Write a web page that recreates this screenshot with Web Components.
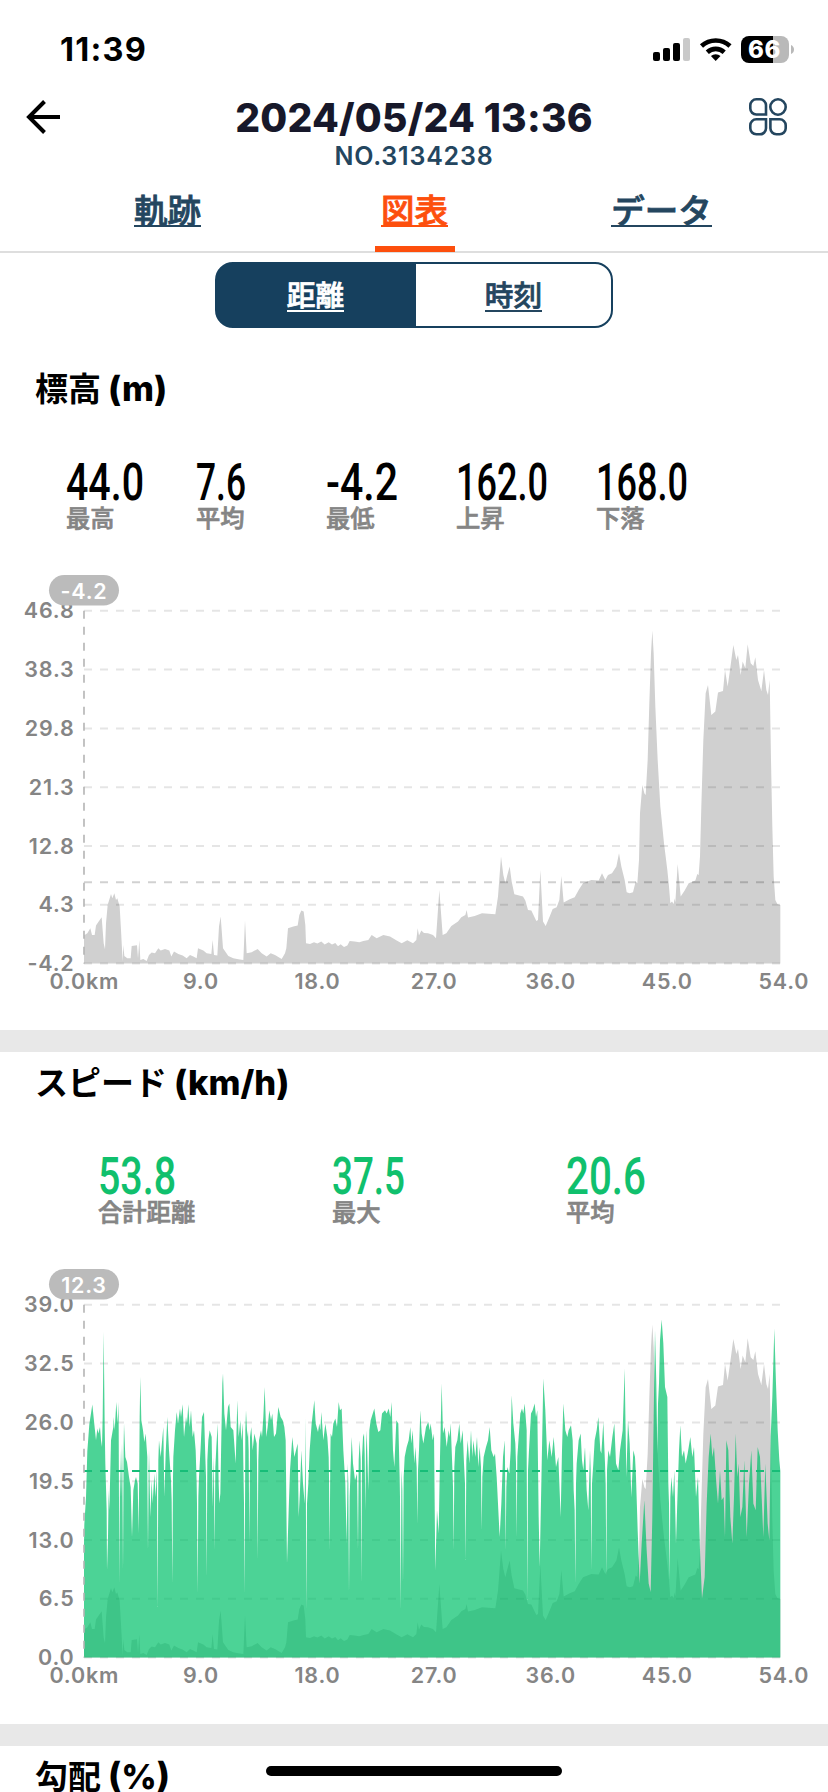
<!DOCTYPE html>
<html lang="ja">
<head>
<meta charset="utf-8">
<title>2024/05/24 13:36</title>
<style>
    html, body { margin: 0; padding: 0; background: #fff; }
    body {
        width: 828px;
        height: 1792px;
        overflow: hidden;
        font-family: Inter, "Noto Sans CJK JP", sans-serif;
        color: #000;
    }
</style>
</head>
<body>
<ride-screen>
    <status-bar slot="top" time="11:39" battery="66"></status-bar>
    <ride-header slot="top" number="NO.3134238">2024/05/24 13:36</ride-header>
    <tab-bar slot="top">
        <tab-item>軌跡</tab-item>
        <tab-item active>図表</tab-item>
        <tab-item>データ</tab-item>
    </tab-bar>
    <segment-control slot="top">
        <span slot="left">距離</span>
        <span slot="right">時刻</span>
    </segment-control>

    <chart-panel heading="標高" unit="(m)">
        <stat-value slot="stats" value="44.0" fit="78">最高</stat-value>
        <stat-value slot="stats" value="7.6" fit="50">平均</stat-value>
        <stat-value slot="stats" value="-4.2" fit="72">最低</stat-value>
        <stat-value slot="stats" value="162.0" fit="92">上昇</stat-value>
        <stat-value slot="stats" value="168.0" fit="92">下落</stat-value>
        <ride-chart ticks="46.8,38.3,29.8,21.3,12.8,4.3,-4.2" badge="-4.2" average="322.3"></ride-chart>
    </chart-panel>
    <chart-panel heading="スピード" unit="(km/h)" wide>
        <stat-value slot="stats" value="53.8" fit="78">合計距離</stat-value>
        <stat-value slot="stats" value="37.5" fit="73">最大</stat-value>
        <stat-value slot="stats" value="20.6" fit="80">平均</stat-value>
        <ride-chart ticks="39.0,32.5,26.0,19.5,13.0,6.5,0.0" badge="12.3" average="217" speed></ride-chart>
    </chart-panel>
    <chart-panel heading="勾配" unit="(%)"></chart-panel>
</ride-screen>

<script>
// "x,height" pairs, three units to a pixel, height measured up from the axis
const ELEVATION = `0,86 2,86 10,91 19,106 24,86 32,86 36,114 44,126 53,139 59,61 63,43 66,121 71,176 81,209 85,196 91,211
96,191 100,196 107,171 111,101 116,6 118,56 121,23 130,16 140,16 143,53 159,55 162,16 166,71 169,11 178,14 188,8 195,26
203,33 213,31 223,46 230,39 243,44 256,39 262,21 270,36 283,29 296,24 308,16 318,26 328,21 338,16 342,46 358,39 368,31
382,29 386,71 390,26 400,24 405,111 410,141 413,101 417,46 433,23 448,16 463,13 478,11 483,129 488,31 503,34 521,44
533,31 548,21 560,31 573,26 593,14 603,31 607,46 612,106 628,111 641,114 646,146 652,159 659,156 664,116 666,61 678,59
690,64 700,60 712,66 722,57 734,64 744,57 754,62 762,52 770,58 780,50 790,54 797,68 812,66 826,64 838,68 853,71 863,86
878,76 898,86 918,81 938,69 953,61 970,70 987,61 997,71 1001,106 1005,84 1012,99 1020,92 1032,91 1047,86 1056,76
1066,221 1076,86 1087,91 1102,113 1122,126 1132,139 1144,146 1148,161 1152,138 1172,143 1194,151 1234,148 1242,201
1251,321 1258,266 1264,241 1270,266 1277,291 1283,246 1291,208 1317,201 1324,189 1332,161 1342,159 1357,128 1362,131
1369,281 1377,126 1385,113 1397,141 1406,164 1418,169 1426,191 1432,263 1439,183 1457,193 1472,199 1484,221 1497,241
1522,251 1544,249 1554,271 1564,251 1572,266 1584,271 1597,291 1605,331 1612,291 1622,251 1628,214 1637,211 1647,214
1655,246 1660,241 1665,311 1668,451 1675,536 1681,511 1685,506 1691,611 1696,781 1701,931 1705,999 1709,931 1714,771
1721,611 1729,471 1740,361 1750,281 1755,231 1759,181 1764,186 1769,179 1772,196 1774,183 1781,299 1790,201 1802,219
1814,241 1834,249 1840,269 1844,266 1848,321 1852,471 1858,671 1865,811 1872,836 1882,746 1894,756 1902,813 1917,818
1923,881 1931,831 1938,881 1948,956 1957,911 1962,926 1970,866 1976,906 1984,886 1991,958 2000,901 2008,893 2014,919
2022,851 2032,818 2040,881 2047,821 2052,806 2057,851 2061,611 2065,411 2069,261 2074,191 2080,179 2089,176`;

const SPEED = `0,340 1,400 6,480 10,620 16,700 25,759 31,700 36,652 40,687 43,672 48,692 51,652 54,632 56,722 59,977 62,700
64,582 68,442 69,262 72,362 74,502 76,442 78,522 81,652 88,692 89,722 92,682 97,767 101,702 104,767 106,222 108,622
111,482 114,642 117,262 120,702 124,602 129,587 135,542 140,512 144,362 148,502 153,532 156,542 161,522 164,372 167,722
169,842 172,712 177,682 181,647 185,672 190,602 192,322 195,622 199,422 203,532 206,462 211,552 215,482 218,562 221,152
225,652 230,602 238,692 241,482 245,612 250,722 255,622 261,532 265,222 268,602 273,682 278,737 282,702 288,747 291,722
296,760 300,662 306,722 309,702 313,760 317,692 321,742 326,662 330,682 335,622 338,522 341,192 345,542 350,632 354,722
360,737 364,602 368,242 373,652 377,682 383,662 386,452 389,602 392,322 397,632 401,702 404,522 406,462 409,492 412,662
415,822 417,852 421,732 426,682 432,752 436,762 440,692 448,682 455,582 460,772 464,662 469,712 472,652 476,702 479,522
482,192 486,742 490,662 492,682 496,342 498,662 502,692 506,622 511,672 518,642 521,292 525,652 531,682 534,662 538,722
542,812 547,662 551,692 556,742 561,712 565,732 570,662 576,672 583,752 590,722 596,712 601,692 605,652 609,282 614,442
618,562 625,662 631,602 636,622 641,642 644,422 648,502 652,622 657,522 662,462 665,722 667,142 673,522 677,622 683,702
691,772 695,702 702,677 706,702 709,682 712,737 718,652 724,702 730,662 734,602 737,322 740,672 744,662 748,702 754,717
759,692 764,767 768,742 773,747 778,622 784,522 788,342 791,582 795,192 799,542 803,662 807,582 813,532 819,552 822,322
827,652 832,222 837,662 840,672 844,442 848,682 853,502 856,682 860,712 871,747 877,702 883,677 889,682 894,732 903,742
908,732 914,747 919,722 923,767 927,622 931,572 937,712 943,702 947,542 950,142 953,562 957,222 962,602 968,632 974,652
979,692 982,642 986,682 991,582 994,632 1000,402 1005,622 1009,742 1013,672 1018,642 1026,692 1033,707 1037,682 1040,702
1046,652 1050,672 1054,262 1059,442 1064,372 1068,602 1073,822 1077,672 1082,692 1088,632 1094,682 1097,662 1100,702
1105,572 1109,322 1114,632 1120,652 1126,702 1130,642 1136,682 1140,582 1145,292 1151,652 1156,582 1161,682 1165,602
1168,652 1174,602 1179,662 1183,572 1187,632 1193,382 1199,602 1206,632 1212,652 1217,692 1222,622 1229,602 1233,612
1238,542 1243,442 1247,362 1252,462 1257,602 1262,652 1265,322 1270,572 1276,552 1280,622 1283,787 1288,702 1294,642
1298,362 1304,662 1309,732 1314,747 1318,732 1322,762 1328,682 1330,172 1335,622 1341,732 1346,742 1352,762 1356,722
1360,742 1364,422 1367,272 1372,522 1378,837 1384,742 1390,592 1396,652 1403,602 1409,662 1416,572 1423,602 1430,422
1434,622 1438,762 1444,682 1450,662 1454,682 1461,697 1466,652 1469,502 1474,222 1478,582 1484,652 1490,672 1494,592
1498,562 1503,632 1508,502 1513,442 1518,622 1522,262 1528,582 1532,652 1538,682 1543,722 1549,622 1552,612 1558,707
1563,582 1567,242 1573,622 1578,602 1585,662 1591,702 1596,582 1603,562 1608,622 1616,682 1622,867 1627,542 1632,712
1637,642 1642,482 1648,622 1653,602 1656,542 1661,382 1667,222 1673,342 1681,472 1688,322 1694,222 1700,197 1705,422
1709,722 1713,982 1717,822 1720,612 1725,822 1728,952 1733,1014 1738,942 1743,812 1750,782 1753,522 1757,232 1762,542
1767,482 1771,562 1776,342 1781,502 1785,622 1789,697 1794,602 1800,622 1805,582 1811,612 1819,662 1825,602 1830,632
1836,482 1842,542 1848,322 1854,177 1862,242 1868,462 1874,602 1880,672 1885,602 1890,632 1897,522 1902,462 1908,562
1913,472 1919,482 1923,362 1927,652 1933,622 1939,422 1945,342 1950,482 1955,672 1960,542 1964,582 1969,422 1975,452
1981,592 1988,362 1995,522 2002,622 2008,462 2015,442 2021,632 2028,602 2033,482 2038,362 2044,582 2051,402 2056,352
2060,662 2065,782 2071,987 2076,822 2081,682 2086,592 2089,560`;

const PLOT = { left: 84, right: 780.4, top: 50.8, bottom: 403.6 };

function areaPath(data) {
    const raw = data.split(/\s+/).map(pair => pair.split(",").map(Number));
    const points = [];
    raw.forEach(([x, h], i) => {
        const prev = raw[i - 1];
        const next = raw[i + 1];
        // a short stop is a needle-thin gap, so keep its walls steep
        const stop = prev && next && prev[1] - h > 190 && next[1] - h > 190 && next[0] - prev[0] < 14;
        if (stop) points.push([x - 2, prev[1] - 60]);
        points.push([x, h]);
        if (stop) points.push([x + 2, next[1] - 60]);
    });
    const line = points.map(([x, h]) => `${(PLOT.left + x / 3).toFixed(2)} ${(PLOT.bottom - h / 3).toFixed(2)}`);
    return `M${PLOT.left} ${PLOT.bottom}L${line.join("L")}V${PLOT.bottom}Z`;
}

class RideScreen extends HTMLElement {
    constructor() {
        super();
        this.attachShadow({ mode: "open" });
    }
    connectedCallback() {
        this.shadowRoot.innerHTML = `
            <style>
                :host { display: block; position: relative; width: 828px; height: 1792px; overflow: hidden; background: #fff; }
                header { height: 358px; }
                .home { position: absolute; left: 266px; top: 1766px; width: 296px; height: 10px; border-radius: 5px; background: #000; }
            </style>
            <header><slot name="top"></slot></header>
            <main><slot></slot></main>
            <div class="home"></div>
        `;
    }
}

class StatusBar extends HTMLElement {
    constructor() {
        super();
        this.attachShadow({ mode: "open" });
    }
    connectedCallback() {
        this.shadowRoot.innerHTML = `
            <style>
                :host { display: flex; justify-content: space-between; box-sizing: border-box; height: 88px; padding: 30px 33px 0 60px; }
                time { font-size: 32.5px; font-weight: 700; line-height: 40px; letter-spacing: 1.2px; }
                svg { display: block; }
            </style>
            <time>${this.getAttribute("time")}</time>
            <svg width="143" height="36" viewBox="652 30 143 36">
                <rect x="653" y="52" width="7" height="9" rx="2"/>
                <rect x="663" y="48" width="7" height="13" rx="2"/>
                <rect x="673" y="43" width="7" height="18" rx="2"/>
                <rect x="683" y="38" width="7" height="23" rx="2" fill="#c9c9c9"/>
                <g fill="none" stroke="#000" stroke-width="4.6">
                    <path d="M701.5 46a21 21 0 0 1 28.500 0"/>
                    <path d="M707.300 52.200a12.500 12.500 0 0 1 16.900 0"/>
                </g>
                <path d="M715.700 61l-4.800-4.900a7 7 0 0 1 9.600 0z"/>
                <clipPath id="body"><rect x="741" y="36" width="48" height="27" rx="8"/></clipPath>
                <g clip-path="url(#body)">
                    <rect x="741" y="36" width="32" height="27"/>
                    <rect x="773" y="36" width="16" height="27" fill="#b9b9b9"/>
                </g>
                <path d="M791 45q3 1.500 3 4.500t-3 4.500z" fill="#b9b9b9"/>
                <text x="764.500" y="58.300" text-anchor="middle" font-size="24" font-weight="800" letter-spacing="0.5" fill="#fff">${this.getAttribute("battery")}</text>
            </svg>
        `;
    }
}

class RideHeader extends HTMLElement {
    constructor() {
        super();
        this.attachShadow({ mode: "open" });
    }
    connectedCallback() {
        this.shadowRoot.innerHTML = `
            <style>
                :host { display: flex; justify-content: space-between; box-sizing: border-box; height: 90px; padding: 7px 38px 0 24px; }
                svg { display: block; fill: none; }
                .back { margin-top: 4px; }
                .menu { margin-top: 1px; }
                .title { flex: 1; padding-left: 16px; text-align: center; }
                h1 { margin: 0; font-size: 39px; line-height: 46px; font-weight: 800; color: #17182a; letter-spacing: 0.2px; white-space: nowrap; }
                p { margin: 0; font-size: 25px; line-height: 30px; font-weight: 600; color: #24465f; letter-spacing: 0.8px; }
            </style>
            <svg class="back" width="40" height="36" viewBox="24 99 40 36" stroke="#000" stroke-width="4">
                <path d="M60 117H29M44.500 101.500L29 117l15.500 15.500"/>
            </svg>
            <div class="title">
                <h1><slot></slot></h1>
                <p>${this.getAttribute("number")}</p>
            </div>
            <svg class="menu" width="42" height="42" viewBox="748 96 42 42" stroke="#24465f" stroke-width="2.600">
                <path d="M756.300 99.300h3.700a6 6 0 0 1 6 6v9.200h-9.700a6 6 0 0 1-6-6v-3.200a6 6 0 0 1 6-6z"/>
                <circle cx="778" cy="107" r="7.700"/>
                <path d="M766 119.300v9a6 6 0 0 1-6 6h-3.700a6 6 0 0 1-6-6v-3a6 6 0 0 1 6-6z"/>
                <path d="M770.400 119.300h9.300a6 6 0 0 1 6 6v3a6 6 0 0 1-6 6h-3.300a6 6 0 0 1-6-6z"/>
            </svg>
        `;
    }
}

class TabBar extends HTMLElement {
    constructor() {
        super();
        this.attachShadow({ mode: "open" });
    }
    connectedCallback() {
        this.shadowRoot.innerHTML = `
            <style>
                :host { display: grid; grid-template-columns: repeat(3, 1fr); box-sizing: border-box; height: 75px; padding: 0 43px 0 44px; border-bottom: 2px solid #dedede; }
            </style>
            <slot></slot>
        `;
    }
}

class TabItem extends HTMLElement {
    constructor() {
        super();
        this.attachShadow({ mode: "open" });
    }
    connectedCallback() {
        this.shadowRoot.innerHTML = `
            <style>
                :host { display: flex; flex-direction: column; align-items: center; justify-content: space-between; height: 74px; color: #24465f; }
                :host([active]) { color: #fd4f0d; }
                span { margin-top: 8px; font-size: 33.5px; line-height: 50px; font-weight: 500; -webkit-text-stroke: 0.8px currentColor; position: relative; }
                /* one straight rule, close under the glyphs */
                span::after { content: ""; position: absolute; left: 0; right: 0; bottom: 9px; height: 2px; background: currentColor; }
                i { width: 80px; height: 6px; }
                :host([active]) i { background: #fd4f0d; }
            </style>
            <span><slot></slot></span><i></i>
        `;
    }
}

class SegmentControl extends HTMLElement {
    constructor() {
        super();
        this.attachShadow({ mode: "open" });
    }
    connectedCallback() {
        this.shadowRoot.innerHTML = `
            <style>
                :host { display: grid; grid-template-columns: 199px 1fr; box-sizing: border-box; width: 398px; height: 66px; margin: 9px auto 0 215px; border: 2px solid #16405e; border-radius: 18px; overflow: hidden; background: linear-gradient(to right, #16405e 199px, #fff 199px); }
                div { display: flex; justify-content: center; align-items: center; color: #24465f; }
                .on { color: #fff; padding-right: 2px; }
                p { position: relative; margin: 2px 0 0; font-size: 28.700px; line-height: 42px; font-weight: 500; -webkit-text-stroke: 0.7px currentColor; }
                p::after { content: ""; position: absolute; left: 0; right: 0; bottom: 5px; height: 2px; background: currentColor; }
            </style>
            <div class="on"><p><slot name="left"></slot></p></div>
            <div><p><slot name="right"></slot></p></div>
        `;
    }
}

class ChartPanel extends HTMLElement {
    constructor() {
        super();
        this.attachShadow({ mode: "open" });
    }
    connectedCallback() {
        this.shadowRoot.innerHTML = `
            <style>
                :host { display: block; box-sizing: border-box; height: 694px; border-bottom: 22px solid #e8e8e8; }
                h2 { display: flex; gap: 7px; margin: 0; height: 96px; padding: 7px 0 0 35px; box-sizing: border-box; font-size: 33px; line-height: 48px; font-weight: 700; }
                h2 span { font-size: 34.5px; font-weight: 800; }
                .stats { display: flex; gap: 52px; height: 106px; padding-left: 66px; }
                :host([wide]) .stats { display: grid; grid-template-columns: repeat(3, 234px); gap: 0; padding-left: 98px; }
            </style>
            <h2>${this.getAttribute("heading")}<span>${this.getAttribute("unit")}</span></h2>
            <div class="stats"><slot name="stats"></slot></div>
            <slot></slot>
        `;
    }
}

class StatValue extends HTMLElement {
    constructor() {
        super();
        this.attachShadow({ mode: "open" });
    }
    connectedCallback() {
        this.shadowRoot.innerHTML = `
            <style>
                :host { display: block; min-width: 78px; color: #000; }
                :host-context([wide]) { color: #10c06d; }
                svg { display: block; overflow: visible; }
                text { font-family: Roboto, sans-serif; font-size: 52px; font-weight: 500; fill: currentColor; }
                p { margin: 0; font-size: 24.300px; line-height: 30px; font-weight: 500; color: #858585; white-space: nowrap; -webkit-text-stroke: 0.7px #858585; }
            </style>
            <svg width="${this.getAttribute("fit") - 4}" height="49"><text x="0" y="46.200" textLength="${this.getAttribute("fit")}" lengthAdjust="spacingAndGlyphs">${this.getAttribute("value")}</text></svg>
            <p><slot></slot></p>
        `;
    }
}

class RideChart extends HTMLElement {
    constructor() {
        super();
        this.attachShadow({ mode: "open" });
    }
    connectedCallback() {
        const { left, right, top, bottom } = PLOT;
        const speed = this.hasAttribute("speed");
        const average = this.getAttribute("average");
        const ticks = this.getAttribute("ticks").split(",");
        const step = (bottom - top) / (ticks.length - 1);

        const lines = ticks.map((t, i) => `<path class="grid" d="M${left} ${top + i * step}H${right}"/>`).join("");
        const yLabels = ticks.map((t, i) => `<text x="74.5" y="${top + i * step + 7.6}" text-anchor="end">${t}</text>`).join("");
        const xLabels = ["0.0km", "9.0", "18.0", "27.0", "36.0", "45.0", "54.0"]
            .map((t, i) => `<text x="${left + 0.3 + i * 116.6}" y="429.300" text-anchor="middle">${t}</text>`).join("");

        this.shadowRoot.innerHTML = `
            <style>
                :host { display: block; height: 470px; }
                svg { display: block; }
                text { font-size: 21.500px; font-weight: 600; letter-spacing: 0.8px; fill: #858585; }
                .grid { stroke: rgba(0, 0, 0, 0.1); stroke-width: 2; stroke-dasharray: 8 8; }
                .average { stroke: ${speed ? "#17bd78" : "rgba(0, 0, 0, 0.18)"}; stroke-width: 2; stroke-dasharray: 8 8; }
                .cursor { stroke: #b4b4b4; stroke-width: 1.6; stroke-dasharray: 8 8; }
                .badge { fill: #fff; }
            </style>
            <svg width="828" height="470">
                <path d="${areaPath(ELEVATION)}" fill="#d0d0d0"/>
                ${lines}
                ${speed ? `<path d="${areaPath(SPEED)}" fill="rgba(0, 192, 106, 0.7)"/>` : ""}
                <path class="average" d="M${left} ${average}H${right}"/>
                <path class="cursor" d="M${left} ${top}V${bottom}"/>
                ${yLabels}${xLabels}
                <rect x="49" y="15" width="70" height="30.600" rx="15.300" fill="#bbb"/>
                <text class="badge" x="84" y="39.300" text-anchor="middle">${this.getAttribute("badge")}</text>
            </svg>
        `;
    }
}

customElements.define("ride-screen", RideScreen);
customElements.define("status-bar", StatusBar);
customElements.define("ride-header", RideHeader);
customElements.define("tab-bar", TabBar);
customElements.define("tab-item", TabItem);
customElements.define("segment-control", SegmentControl);
customElements.define("chart-panel", ChartPanel);
customElements.define("stat-value", StatValue);
customElements.define("ride-chart", RideChart);
</script>
</body>
</html>
